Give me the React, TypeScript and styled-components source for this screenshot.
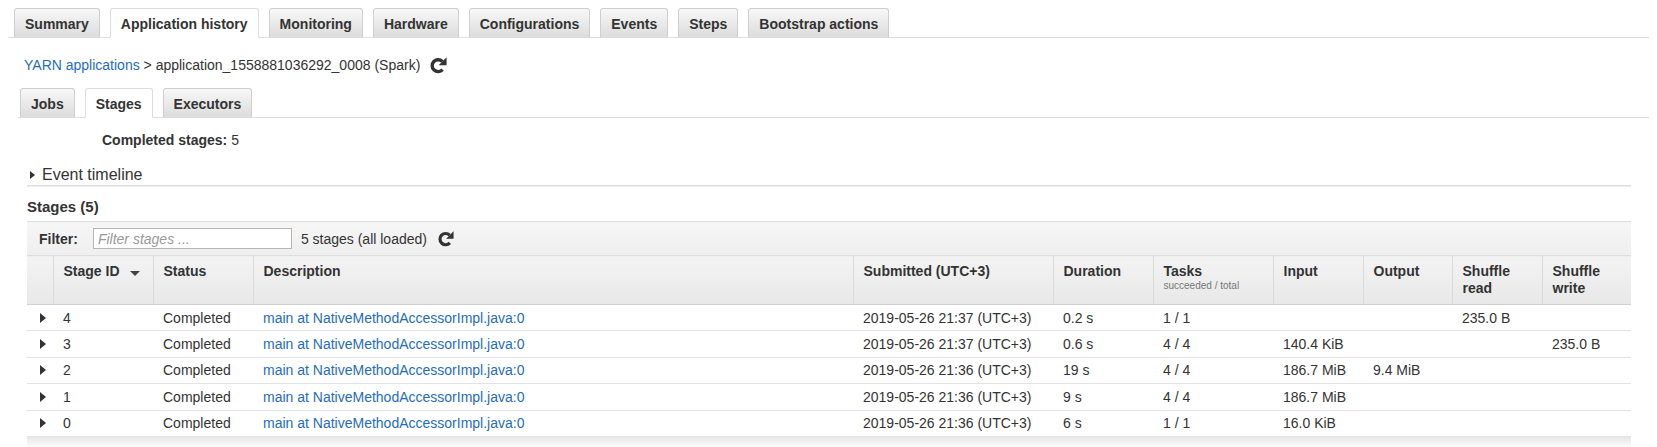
import React from 'react'
import styled, { createGlobalStyle } from 'styled-components'

const GlobalStyle = createGlobalStyle`
  body {
    margin: 0;
    background: #fff;
    font-family: "Liberation Sans", Arial, sans-serif;
    font-size: 14px;
    color: #333;
  }
`

const Page = styled.div`
  padding: 8px 8px 0 8px;
`

const TabBar = styled.div<{ $left: number; $inset: number }>`
  display: flex;
  gap: 10px;
  margin-left: ${p => p.$left}px;
  padding-left: ${p => p.$inset}px;
  border-bottom: 1px solid #ddd;
`

const Tab = styled.div<{ $active?: boolean }>`
  box-sizing: border-box;
  height: 30px;
  margin-bottom: -1px;
  padding: 2px 10px 0;
  display: flex;
  align-items: center;
  font-weight: bold;
  color: #333;
  border: 1px solid ${p => (p.$active ? '#ddd' : '#cfcfcf')};
  border-bottom-color: ${p => (p.$active ? '#fff' : '#ddd')};
  border-radius: 3px 3px 0 0;
  background: ${p => (p.$active ? '#fff' : 'linear-gradient(#f8f8f8, #dcdcdc)')};
  cursor: pointer;
`

const Breadcrumb = styled.div`
  display: flex;
  align-items: center;
  height: 20px;
  margin: 17px 0 13px 16px;
  white-space: pre;
`

const Link = styled.a`
  color: #1f6cc0;
  text-decoration: none;
  cursor: pointer;
`

const Refresh = styled.span<{ $gap: number }>`
  display: inline-flex;
  margin-left: ${p => p.$gap}px;
  color: #333;
  cursor: pointer;
`

// bold "repeat" arrow, like the console's refresh glyph
const RefreshIcon = ({ size = 17 }: { size?: number }) => (
  <svg width={size} height={size} viewBox="0 0 16 16">
    <path d="M11.9 4.9 A5.3 5.3 0 1 0 12.1 12.1" fill="none" stroke="currentColor" strokeWidth="3" />
    <polygon points="15.6,1.2 15.6,8.2 8.6,8.2" fill="currentColor" />
  </svg>
)

const Summary = styled.div`
  margin: 14px 0 0 94px;
  line-height: 17px;
  b { font-weight: bold; }
`

const Section = styled.div`
  margin: 0 18px 0 19px;
`

const Timeline = styled.div`
  display: flex;
  align-items: center;
  margin-top: 16px;
  padding: 0 0 1px 3px;
  font-size: 16px;
  line-height: 19px;
  color: #333;
  border-bottom: 1px solid #dcdcdc;
  box-shadow: 0 1px 0 #efefef;
`

const Caret = styled.span<{ $size: number }>`
  display: inline-block;
  width: 0;
  height: 0;
  border-left: ${p => p.$size + 1}px solid #333;
  border-top: ${p => p.$size}px solid transparent;
  border-bottom: ${p => p.$size}px solid transparent;
`

const TimelineCaret = styled(Caret)`
  margin-right: 7px;
`

const Heading = styled.div`
  margin-top: 12px;
  font-size: 15px;
  font-weight: bold;
  line-height: 18px;
`

const FilterBar = styled.div`
  display: flex;
  align-items: center;
  height: 33px;
  margin-top: 5px;
  padding-left: 12px;
  border-top: 1px solid #ddd;
  background: linear-gradient(#f6f6f6, #efefef);
`

const FilterLabel = styled.span`
  font-weight: bold;
  margin-right: 15px;
`

const FilterInput = styled.input`
  box-sizing: border-box;
  width: 199px;
  height: 21px;
  margin-right: 9px;
  padding: 0 4px;
  border: 1px solid #b5b5b5;
  font-family: inherit;
  font-size: 14px;
  &::placeholder {
    color: #999;
    font-style: italic;
  }
`

const Table = styled.table`
  width: 100%;
  table-layout: fixed;
  border-collapse: collapse;
`

const Th = styled.th`
  height: 41px;
  padding: 7px 10px 0;
  text-align: left;
  vertical-align: top;
  font-weight: bold;
  line-height: 17px;
  color: #333;
  background: linear-gradient(#f3f3f3, #e8e8e8);
  border-top: 1px solid #ddd;
  border-bottom: 1px solid #d0d0d0;
  & + & {
    border-left: 1px solid #dadada;
  }
`

const SubLabel = styled.span`
  display: block;
  font-size: 10px;
  font-weight: normal;
  line-height: 12px;
  color: #777;
`

const SortCaret = styled.span`
  display: inline-block;
  vertical-align: middle;
  margin: 2px 0 0 10px;
  border-top: 5px solid #444;
  border-left: 5px solid transparent;
  border-right: 5px solid transparent;
`

const Tr = styled.tr`
  & + & td {
    border-top: 1px solid #e3e3e3;
  }
`

const Td = styled.td<{ $expander?: boolean }>`
  height: 25.4px;
  padding: 0 ${p => (p.$expander ? '0 0 13px' : '10px')};
  vertical-align: middle;
  white-space: nowrap;
  color: #333;
`

const Shade = styled.div`
  height: 12px;
  background: linear-gradient(#e4e4e4, #fff);
`

const topTabs = ['Summary', 'Application history', 'Monitoring', 'Hardware', 'Configurations', 'Events', 'Steps', 'Bootstrap actions']
const subTabs = ['Jobs', 'Stages', 'Executors']
const widths = [26, 100, 100, 600, 200, 100, 120, 90, 89, 90, 89]

const stages = [
  { id: 4, submitted: '2019-05-26 21:37 (UTC+3)', duration: '0.2 s', tasks: '1 / 1', input: '', output: '', read: '235.0 B', write: '' },
  { id: 3, submitted: '2019-05-26 21:37 (UTC+3)', duration: '0.6 s', tasks: '4 / 4', input: '140.4 KiB', output: '', read: '', write: '235.0 B' },
  { id: 2, submitted: '2019-05-26 21:36 (UTC+3)', duration: '19 s', tasks: '4 / 4', input: '186.7 MiB', output: '9.4 MiB', read: '', write: '' },
  { id: 1, submitted: '2019-05-26 21:36 (UTC+3)', duration: '9 s', tasks: '4 / 4', input: '186.7 MiB', output: '', read: '', write: '' },
  { id: 0, submitted: '2019-05-26 21:36 (UTC+3)', duration: '6 s', tasks: '1 / 1', input: '16.0 KiB', output: '', read: '', write: '' },
]

export default function App() {
  return (
    <Page>
      <GlobalStyle />
      <TabBar $left={0} $inset={6}>
        {topTabs.map(t => (
          <Tab key={t} $active={t === 'Application history'}>{t}</Tab>
        ))}
      </TabBar>

      <Breadcrumb>
        <Link>YARN applications</Link>
        {' > application_1558881036292_0008 (Spark)'}
        <Refresh $gap={9}><RefreshIcon size={18} /></Refresh>
      </Breadcrumb>

      <TabBar $left={10} $inset={2}>
        {subTabs.map(t => (
          <Tab key={t} $active={t === 'Stages'}>{t}</Tab>
        ))}
      </TabBar>

      <Summary><b>Completed stages:</b> 5</Summary>

      <Section>
        <Timeline>
          <TimelineCaret $size={4} />
          Event timeline
        </Timeline>

        <Heading>Stages (5)</Heading>

        <FilterBar>
          <FilterLabel>Filter:</FilterLabel>
          <FilterInput placeholder="Filter stages ..." />
          5 stages (all loaded)
          <Refresh $gap={10}><RefreshIcon /></Refresh>
        </FilterBar>

        <Table>
          <colgroup>
            {widths.map((w, i) => <col key={i} style={{ width: w }} />)}
          </colgroup>
          <thead>
            <tr>
              <Th />
              <Th>Stage ID<SortCaret /></Th>
              <Th>Status</Th>
              <Th>Description</Th>
              <Th>Submitted (UTC+3)</Th>
              <Th>Duration</Th>
              <Th>Tasks<SubLabel>succeeded / total</SubLabel></Th>
              <Th>Input</Th>
              <Th>Output</Th>
              <Th>Shuffle<br />read</Th>
              <Th>Shuffle<br />write</Th>
            </tr>
          </thead>
          <tbody>
            {stages.map(s => (
              <Tr key={s.id}>
                <Td $expander><Caret $size={5} /></Td>
                <Td>{s.id}</Td>
                <Td>Completed</Td>
                <Td><Link>main at NativeMethodAccessorImpl.java:0</Link></Td>
                <Td>{s.submitted}</Td>
                <Td>{s.duration}</Td>
                <Td>{s.tasks}</Td>
                <Td>{s.input}</Td>
                <Td>{s.output}</Td>
                <Td>{s.read}</Td>
                <Td>{s.write}</Td>
              </Tr>
            ))}
          </tbody>
        </Table>
        <Shade />
      </Section>
    </Page>
  )
}
